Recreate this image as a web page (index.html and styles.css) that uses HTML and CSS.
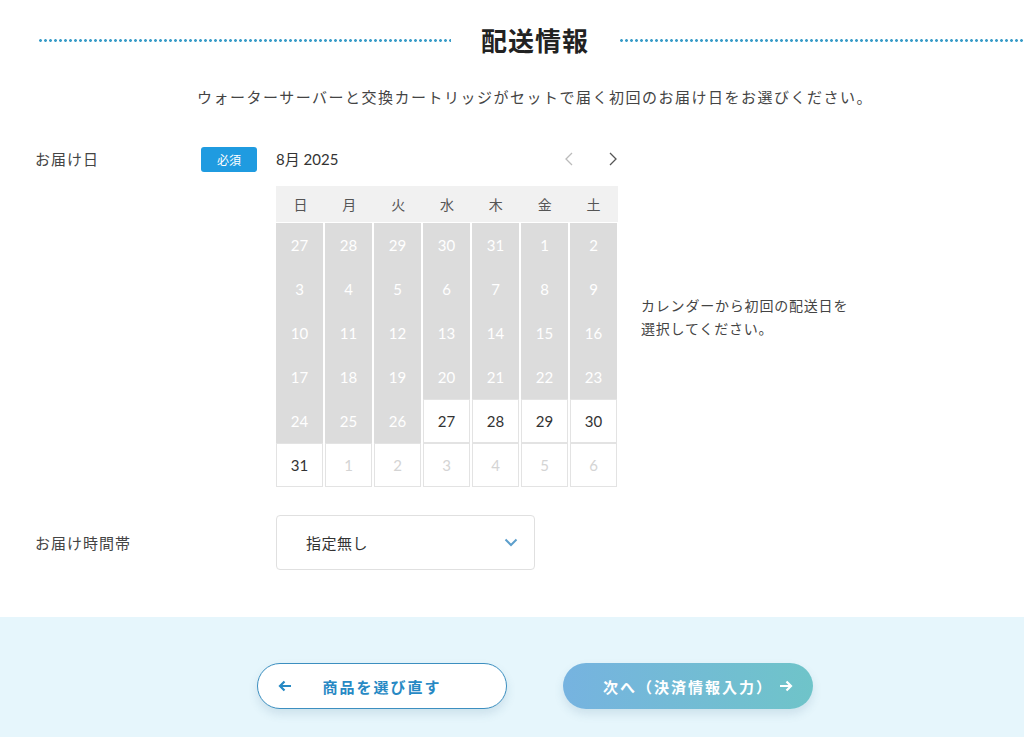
FILE: index.html
```html
<!DOCTYPE html>
<html lang="ja">
<head>
<meta charset="utf-8">
<link rel="stylesheet" href="styles.css">
</head>
<body>
<div class="page">
  <div class="section-title">
    <span class="dots"></span>
    <h2>配送情報</h2>
    <span class="dots"></span>
  </div>
  <p class="lead">ウォーターサーバーと交換カートリッジがセットで届く初回のお届け日をお選びください。</p>

  <div class="form-row row-date">
    <div class="label">お届け日</div>
    <div class="badge-col"><span class="badge">必須</span></div>
    <div class="calendar">
      <div class="cal-head">
        <span class="month">8月 2025</span>
        <span class="nav">
          <svg class="prev" width="10" height="14" viewBox="0 0 10 14"><path d="M8 1 L2 7 L8 13" fill="none" stroke="currentColor" stroke-width="1.3"/></svg>
          <svg class="next" width="10" height="14" viewBox="0 0 10 14"><path d="M2 1 L8 7 L2 13" fill="none" stroke="currentColor" stroke-width="1.3"/></svg>
        </span>
      </div>
      <div class="weekdays">
        <span>日</span><span>月</span><span>火</span><span>水</span><span>木</span><span>金</span><span>土</span>
      </div>
      <div class="days">
        <span class="off">27</span><span class="off">28</span><span class="off">29</span><span class="off">30</span><span class="off">31</span><span class="off">1</span><span class="off">2</span>
        <span class="off">3</span><span class="off">4</span><span class="off">5</span><span class="off">6</span><span class="off">7</span><span class="off">8</span><span class="off">9</span>
        <span class="off">10</span><span class="off">11</span><span class="off">12</span><span class="off">13</span><span class="off">14</span><span class="off">15</span><span class="off">16</span>
        <span class="off">17</span><span class="off">18</span><span class="off">19</span><span class="off">20</span><span class="off">21</span><span class="off">22</span><span class="off">23</span>
        <span class="off">24</span><span class="off">25</span><span class="off">26</span><span class="on">27</span><span class="on">28</span><span class="on">29</span><span class="on">30</span>
        <span class="on">31</span><span class="next-m">1</span><span class="next-m">2</span><span class="next-m">3</span><span class="next-m">4</span><span class="next-m">5</span><span class="next-m">6</span>
      </div>
    </div>
    <p class="note">カレンダーから初回の配送日を<br>選択してください。</p>
  </div>

  <div class="form-row row-time">
    <div class="label">お届け時間帯</div>
    <div class="badge-col"></div>
    <div class="select">
      <span>指定無し</span>
      <svg width="14" height="9" viewBox="0 0 14 9"><path d="M1.5 1.5 L7 7 L12.5 1.5" fill="none" stroke="#5d9fcc" stroke-width="2"/></svg>
    </div>
  </div>
</div>

<div class="footer-band">
  <div class="buttons">
    <a class="btn btn-back">
      <svg class="arr" width="14" height="12" viewBox="0 0 14 12"><path d="M13 6 H2 M6.5 1.5 L2 6 L6.5 10.5" fill="none" stroke="currentColor" stroke-width="2.2"/></svg>
      <span class="btn-text">商品を選び直す</span>
      <span class="spacer"></span>
    </a>
    <a class="btn btn-next">
      <span class="spacer"></span>
      <span class="btn-text">次へ（決済情報入力）</span>
      <svg class="arr" width="14" height="12" viewBox="0 0 14 12"><path d="M1 6 H12 M7.5 1.5 L12 6 L7.5 10.5" fill="none" stroke="currentColor" stroke-width="2.2"/></svg>
    </a>
  </div>
</div>
</body>
</html>
```

FILE: styles.css
```css
html, body {
  margin: 0;
  padding: 0;
  overflow-x: hidden;
  background: #fff;
}
body {
  font-family: "Noto Sans CJK JP", "Noto Sans", sans-serif;
  color: #444;
}
.page {
  width: 1070px;
  box-sizing: border-box;
  padding: 0 0 47px 0;
}
.section-title {
  display: flex;
  align-items: center;
  padding: 21px 38px 0 38px;
  height: 38px;
}
.dots {
  flex: 1;
  height: 3px;
  background-image: radial-gradient(circle, #3a9cc8 1.2px, transparent 1.6px);
  background-size: 5px 3px;
  background-repeat: repeat-x;
}
.section-title h2 {
  margin: 0 30px;
  font-size: 26px;
  font-weight: 700;
  color: #222;
  letter-spacing: 1px;
  line-height: 38px;
}
.lead {
  margin: 27px 0 0 0;
  text-align: center;
  font-size: 15px;
  letter-spacing: 1.5px;
  color: #444;
  line-height: 22px;
}
.form-row {
  display: grid;
  grid-template-columns: 166px 75px auto 1fr;
  padding-left: 35px;
}
.row-date {
  margin-top: 38px;
  align-items: start;
}
.label {
  font-size: 15px;
  letter-spacing: 1px;
  color: #444;
  line-height: 25px;
}
.badge {
  display: inline-block;
  width: 56px;
  height: 25px;
  line-height: 25px;
  text-align: center;
  background: #1f9be0;
  color: #fff;
  font-size: 12px;
  border-radius: 3px;
}
.calendar {
  width: 342px;
}
.cal-head {
  display: flex;
  justify-content: space-between;
  align-items: center;
  height: 25px;
}
.month {
  font-family: "Lato", "Noto Sans CJK JP", sans-serif;
  font-size: 15px;
  color: #333;
}
.nav {
  display: flex;
  gap: 34px;
  padding-right: 0;
}
.nav .prev { color: #bbb; }
.nav .next { color: #555; }
.weekdays {
  margin-top: 15px;
  display: grid;
  grid-template-columns: repeat(7, 1fr);
  background: #f1f1f1;
  height: 36px;
  align-items: center;
  text-align: center;
  font-size: 14px;
  color: #555;
}
.days {
  margin-top: 1px;
  display: grid;
  grid-template-columns: repeat(7, 47px);
  column-gap: 2px;
  grid-auto-rows: 44px;
}
.days span {
  display: flex;
  align-items: center;
  justify-content: center;
  box-sizing: border-box;
  font-family: "Lato", "Noto Sans", sans-serif;
  font-size: 15px;
  border: 1px solid #e3e3e3;
}
.days .off {
  background: #dcdcdc;
  border-color: #dcdcdc;
  color: #fff;
}
.days .on {
  color: #333;
  background: #fff;
}
.days .next-m {
  color: #d4d4d4;
  background: #fff;
}
.note {
  align-self: center;
  margin: 0 0 0 23px;
  font-size: 14px;
  line-height: 23px;
  letter-spacing: 0.8px;
  color: #444;
}
.row-time {
  margin-top: 28px;
  align-items: center;
}
.select {
  width: 259px;
  height: 55px;
  box-sizing: border-box;
  border: 1px solid #e0e0e0;
  border-radius: 4px;
  display: flex;
  align-items: center;
  justify-content: space-between;
  padding: 0 16px 0 29px;
  font-size: 15px;
  color: #333;
  letter-spacing: 0.5px;
}
.footer-band {
  background: #e6f6fc;
  height: 120px;
  padding-top: 46px;
  box-sizing: border-box;
}
.buttons {
  width: 1070px;
  display: flex;
  justify-content: center;
  gap: 56px;
}
.btn {
  width: 250px;
  height: 46px;
  box-sizing: border-box;
  border-radius: 23px;
  display: flex;
  align-items: center;
  padding: 0 20px;
  font-size: 15px;
  font-weight: 700;
  letter-spacing: 2px;
  box-shadow: 0 5px 10px rgba(60, 110, 140, 0.15);
}
.btn-text {
  flex: 1;
  text-align: center;
}
.spacer {
  width: 14px;
}
.btn-back {
  background: #fff;
  border: 1px solid #3c8fc0;
  color: #2789c4;
}
.btn-next {
  background: linear-gradient(90deg, #76b3e0 0%, #6fc4c9 100%);
  color: #fff;
}
.arr { flex: none; }
```
